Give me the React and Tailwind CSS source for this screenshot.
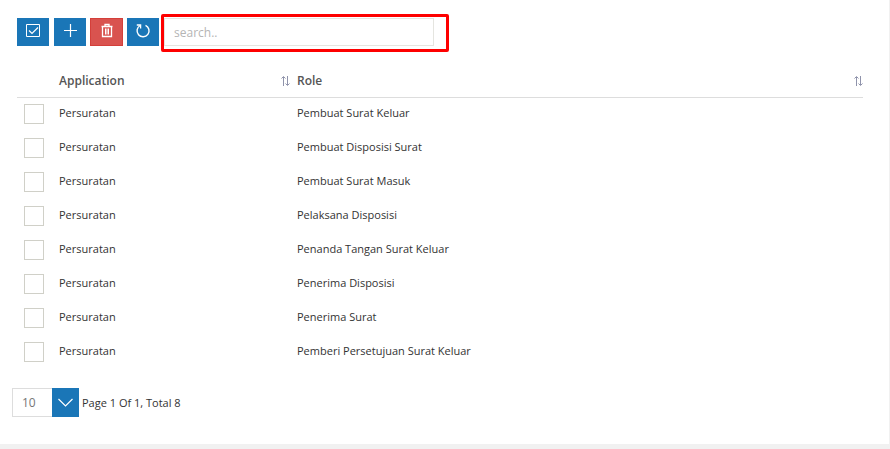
const roles = [
  'Pembuat Surat Keluar',
  'Pembuat Disposisi Surat',
  'Pembuat Surat Masuk',
  'Pelaksana Disposisi',
  'Penanda Tangan Surat Keluar',
  'Penerima Disposisi',
  'Penerima Surat',
  'Pemberi Persetujuan Surat Keluar',
];

function Icon({ children }) {
  return (
    <svg width="16" height="16" viewBox="0 0 16 16" fill="none" stroke="currentColor" aria-hidden="true">
      {children}
    </svg>
  );
}

function ToolButton({ label, danger, children }) {
  return (
    <button
      type="button"
      aria-label={label}
      className={
        danger
          ? 'flex h-7 w-[33px] items-start justify-center border border-[#d43f3a] bg-[#d9534f] pt-1 text-white'
          : 'flex h-7 w-8 items-start justify-center border border-[#1a76b7] bg-[#1a76b7] pt-1 text-white'
      }
    >
      {children}
    </button>
  );
}

function SortButton({ label }) {
  return (
    <button type="button" aria-label={label} className="flex text-[#8f93ab]">
      <svg width="9" height="10" viewBox="0 0 9 10" fill="none" stroke="currentColor" aria-hidden="true">
        <path d="M2.5 10V1M0.5 2.5L2.5 0.5L4.5 2.5M6.5 0V9M4.5 7.5L6.5 9.5L8.5 7.5" />
      </svg>
    </button>
  );
}

export default function App() {
  return (
    <div className="bg-[#f1f1f1] pr-px pb-[5px] font-['Open_Sans',sans-serif] text-[11px] leading-4 text-[#333]">
      <main className="bg-white pt-[14px] pr-[26px] pb-[27px] pl-3">
        <div className="flex items-start pl-[5px]">
          <div className="mr-0.5 flex gap-x-1 pt-1">
            <div className="mr-px">
              <ToolButton label="Select all">
                <Icon>
                  <path d="M1.5 1.5H14.5V13.5H1.5Z" />
                  <path strokeWidth="1.2" d="M4 7.5L7 10.5L13 4.5" />
                </Icon>
              </ToolButton>
            </div>
            <ToolButton label="Add">
              <Icon>
                <path strokeWidth="1.2" d="M8.5 1V14M2 7.5H15" />
              </Icon>
            </ToolButton>
            <ToolButton label="Delete" danger>
              <Icon>
                <path strokeWidth="1.3" d="M2.5 3.5H13.5M6 3V1.5H10V3M3.5 3.5V13.5H12.5V3.5" />
                <path d="M6.5 5.5V11.5M8 5.5V11.5M9.5 5.5V11.5" />
              </Icon>
            </ToolButton>
            <ToolButton label="Refresh">
              <Icon>
                <path strokeWidth="1.4" d="M5.2 2.5A6 6 0 1 0 10.5 2.3" />
                <path strokeWidth="1.3" d="M1.8 2H5.6V5.6" />
              </Icon>
            </ToolButton>
          </div>
          <div className="rounded-[2px] border-[3px] border-[#fe0000] pt-px pr-3 pb-[3px]">
            <input
              type="text"
              aria-label="Search"
              placeholder="search.."
              className="block h-7 w-[270px] border border-[#e5e5e0] bg-white px-[9px] text-xs text-[#555] outline-none placeholder:text-[#b5b5b5]"
            />
          </div>
        </div>

        <table className="mt-3 ml-[5px] w-[calc(100%-5px)] table-fixed border-separate border-spacing-0">
          <thead>
            <tr className="h-[34px] text-left text-xs text-[#555]">
              <td className="w-[42px] border-b border-[#ddd]" />
              <th className="w-[238px] border-b border-[#ddd] p-0 font-semibold">
                <div className="flex items-center justify-between pr-[7px]">
                  Application
                  <SortButton label="Sort by application" />
                </div>
              </th>
              <th className="border-b border-[#ddd] p-0 font-semibold">
                <div className="flex items-center justify-between">
                  Role
                  <SortButton label="Sort by role" />
                </div>
              </th>
            </tr>
          </thead>
          <tbody>
            {roles.map((role) => (
              <tr key={role}>
                <td className="px-[7px] pt-[6px] pb-2">
                  <input
                    type="checkbox"
                    aria-label={role}
                    className="block size-5 appearance-none border border-[#d0d0c8] bg-white checked:bg-[#1a76b7]"
                  />
                </td>
                <td className="p-0 pb-1">Persuratan</td>
                <td className="p-0 pb-1">{role}</td>
              </tr>
            ))}
          </tbody>
        </table>

        <div className="mt-[18px] flex items-center gap-[3px]">
          <div className="grid h-[29px] w-[67px] grid-cols-[40px_27px]">
            <select
              aria-label="Rows per page"
              defaultValue="10"
              className="col-span-2 col-start-1 row-start-1 appearance-none border border-[#ddd] bg-white pl-[9px] text-xs text-[#777]"
            >
              <option>10</option>
              <option>25</option>
              <option>50</option>
            </select>
            <span className="pointer-events-none col-start-2 row-start-1 flex items-center justify-center bg-[#1a76b7] text-white">
              <svg width="15" height="9" viewBox="0 0 15 9" fill="none" stroke="currentColor" strokeWidth="1.2" aria-hidden="true">
                <path d="M0.5 1L7.5 8L14.5 1" />
              </svg>
            </span>
          </div>
          <span>Page 1 Of 1, Total 8</span>
        </div>
      </main>
    </div>
  );
}
